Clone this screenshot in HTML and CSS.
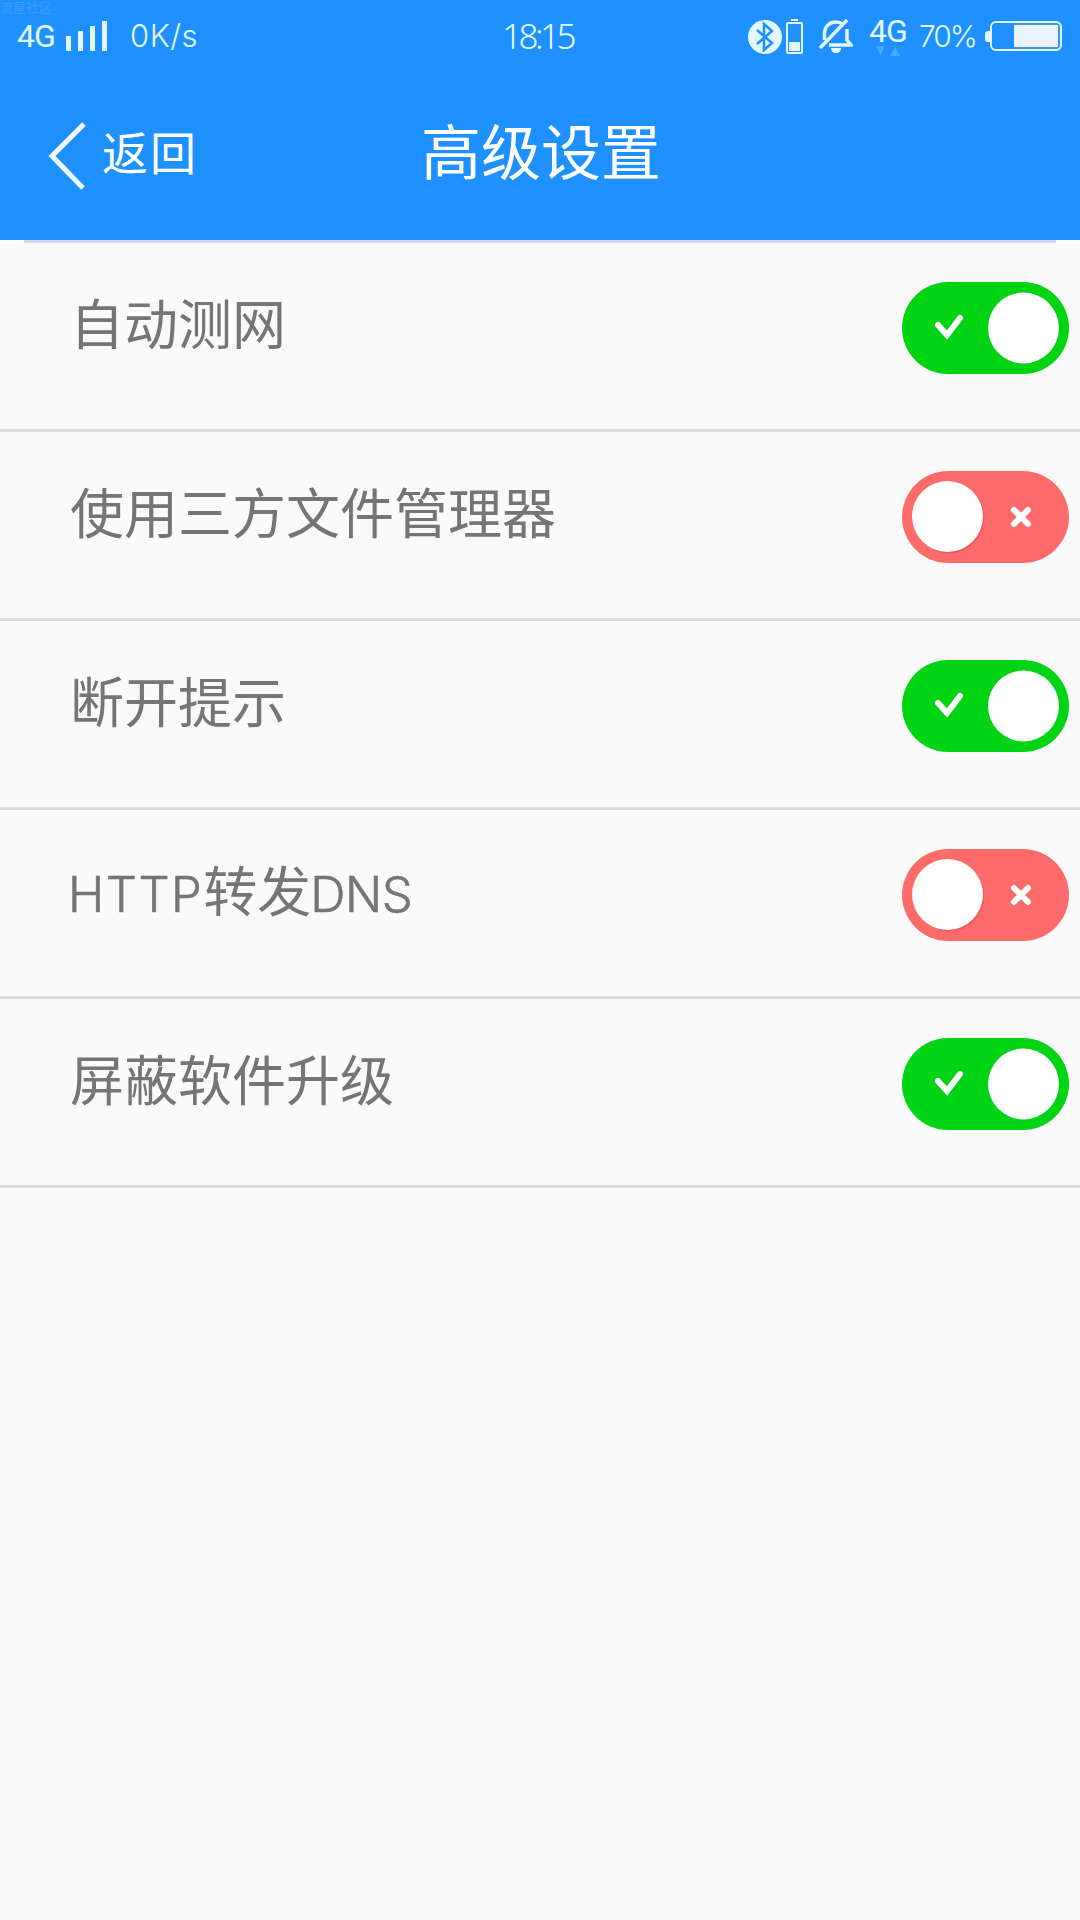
FILE: index.html
```html
<!DOCTYPE html>
<html lang="zh-CN">
<head>
    <meta charset="UTF-8">
    <meta name="viewport" content="width=device-width, initial-scale=1.0">
    <title>高级设置</title>
    <link rel="stylesheet" href="styles.css">
</head>
<body>
    <header class="header">
        <div class="watermark">流星社区</div>

        <!-- 状态栏 -->
        <div class="status-bar">
            <div class="status-left">
                <span class="network">4G</span>
                <svg class="signal" width="42" height="30" viewBox="0 0 42 30">
                    <path d="M0 15h5v15H0zM12 10h5v20h-5zM24 5h5v25h-5zM36 0h5v30h-5z"/>
                </svg>
                <span class="speed">0K/s</span>
            </div>
            <span class="time">18:15</span>
            <div class="status-right">
                <svg class="bluetooth" width="34" height="34" viewBox="0 0 34 34">
                    <circle cx="17" cy="17" r="17"/>
                    <path d="M9 10l15 13-8 7V4l8 7L9 24"/>
                </svg>
                <svg class="mini-battery" width="17" height="35" viewBox="0 0 17 35">
                    <path d="M5 0h7v2H5z"/>
                    <rect class="frame" x="1" y="4" width="15" height="30" rx="1"/>
                    <path d="M3 23h11v9H3z"/>
                </svg>
                <svg class="bell" width="34" height="35" viewBox="0 0 34 35">
                    <path class="line" d="M5.500 21v-6C5.500 7 11 3 17 3c3 0 4 0 6 2M28 10v11l4 5H10M1 29L28 1"/>
                    <path d="M12 29h10c0 3-2 5-5 5s-5-2-5-5z"/>
                </svg>
                <div class="mobile-data">
                    <span class="network">4G</span>
                    <svg class="arrows" width="24" height="10" viewBox="0 0 24 10">
                        <path d="M0 0h9L4.500 9zM14 10h10L19 1z"/>
                    </svg>
                </div>
                <span class="percent">70%</span>
                <svg class="battery" width="77" height="30" viewBox="0 0 77 30">
                    <path d="M5 10H3q-3 0-3 3v5q0 3 3 3h2z"/>
                    <rect class="inner" x="29" y="2" width="46" height="26"/>
                    <rect class="frame" x="6" y="1" width="70" height="28" rx="5"/>
                    <path class="charge" d="M29 4h44v22H29z"/>
                </svg>
            </div>
        </div>

        <!-- 标题栏 -->
        <div class="title-bar">
            <div class="back">
                <svg class="back-icon" width="38" height="70" viewBox="0 0 38 70">
                    <path d="M36 3L4 35l31 32"/>
                </svg>
                <span>返回</span>
            </div>
            <h1 class="title">高级设置</h1>
        </div>
    </header>

    <main class="settings">
        <div class="row">
            <span class="label">自动测网</span>
            <svg class="switch on" width="168" height="92" viewBox="0 0 168 92">
                <rect width="167" height="92" rx="46"/>
                <path d="M36 43l9 10 13-17"/>
                <circle cx="121.500" cy="46" r="35.500"/>
            </svg>
        </div>
        <div class="row">
            <span class="label">使用三方文件管理器</span>
            <svg class="switch off" width="168" height="92" viewBox="0 0 168 92">
                <rect width="167" height="92" rx="46"/>
                <circle class="shade" cx="47" cy="47" r="35.500"/>
                <circle cx="45.500" cy="45.500" r="35.500"/>
                <path d="M112 39l14 14M126 39l-14 14"/>
            </svg>
        </div>
        <div class="row">
            <span class="label">断开提示</span>
            <svg class="switch on" width="168" height="92" viewBox="0 0 168 92">
                <rect width="167" height="92" rx="46"/>
                <path d="M36 43l9 10 13-17"/>
                <circle cx="121.500" cy="46" r="35.500"/>
            </svg>
        </div>
        <div class="row">
            <span class="label"><span class="latin">HTTP</span>转发<span class="latin dns">DNS</span></span>
            <svg class="switch off" width="168" height="92" viewBox="0 0 168 92">
                <rect width="167" height="92" rx="46"/>
                <circle class="shade" cx="47" cy="47" r="35.500"/>
                <circle cx="45.500" cy="45.500" r="35.500"/>
                <path d="M112 39l14 14M126 39l-14 14"/>
            </svg>
        </div>
        <div class="row">
            <span class="label">屏蔽软件升级</span>
            <svg class="switch on" width="168" height="92" viewBox="0 0 168 92">
                <rect width="167" height="92" rx="46"/>
                <path d="M36 43l9 10 13-17"/>
                <circle cx="121.500" cy="46" r="35.500"/>
            </svg>
        </div>
    </main>
</body>
</html>
```
FILE: styles.css
```css
* {
    box-sizing: border-box;
}

body {
    margin: 0;
    min-height: 100vh;
    background: #fafafa;
    font-family: "Noto Sans CJK SC", sans-serif;
    overflow: hidden;
}

svg {
    display: block;
    flex: none;
}

/* 顶部 */
.header {
    position: relative;
    height: 240px;
    background: #1e90ff;
    color: #fff;
}

.watermark {
    position: absolute;
    top: 0;
    left: 0;
    font-size: 13px;
    line-height: 13px;
    color: #3b9cf8;
}

.status-bar {
    display: grid;
    grid-template-columns: 502px 73px 1fr;
    height: 72px;
    color: #e2f8ff;
    fill: #e2f8ff;
    font-family: Inter, "Liberation Sans", sans-serif;
    font-weight: 300;
    line-height: 72px;
    white-space: nowrap;
}

.status-left,
.status-right {
    display: flex;
    align-items: flex-start;
}

.status-left {
    padding-left: 17px;
}

.network {
    width: 37px;
    font-family: Roboto, sans-serif;
    font-size: 32px;
    font-weight: 400;
    letter-spacing: -1px;
}

.signal {
    margin: 21px 22px 0 12px;
}

.speed {
    font-size: 31px;
    letter-spacing: 0.5px;
}

.time {
    font-family: "Noto Sans", sans-serif;
    font-size: 35px;
    letter-spacing: -3.5px;
}

.status-right {
    padding-left: 173px;
}

.bluetooth {
    margin-top: 20px;
}

.bluetooth path {
    fill: none;
    stroke: #1e90ff;
    stroke-width: 2.5;
}

.mini-battery {
    margin: 19px 16px 0 4px;
}

.frame {
    fill: none;
    stroke: #e2f8ff;
    stroke-width: 2;
}

.bell {
    margin-top: 19px;
}

.bell .line {
    fill: none;
    stroke: #e2f8ff;
    stroke-width: 3.5;
}

.mobile-data {
    display: flex;
    flex-direction: column;
    width: 66px;
    padding-left: 16px;
}

.mobile-data .network {
    height: 46px;
    line-height: 62px;
}

.arrows {
    margin-left: 7px;
    fill: #47a9ff;
}

.percent {
    width: 66px;
    font-size: 30px;
    letter-spacing: -2px;
}

.battery {
    margin-top: 21px;
}

.battery .inner {
    fill: #3f92dc;
}

.battery .charge {
    fill: #e8f3fd;
}

/* 标题栏 */
.title-bar {
    display: grid;
    grid-template-columns: 421px 1fr;
    align-items: center;
    height: 160px;
}

.back {
    display: flex;
    align-items: center;
    padding: 8px 0 0 48px;
    font-size: 46px;
    line-height: 64px;
    letter-spacing: 2px;
}

.back span {
    margin: -13px 0 0 16px;
}

.back-icon path {
    fill: none;
    stroke: #effbff;
    stroke-width: 5;
}

.title {
    margin: -7px 0 0;
    font-size: 60px;
    font-weight: 400;
    line-height: 80px;
    white-space: nowrap;
}

/* 设置列表 */
.settings::before {
    content: "";
    display: block;
    height: 3px;
    border: solid #fff;
    border-width: 0 24px;
    background: #d2dae5;
}

.row {
    display: flex;
    justify-content: space-between;
    align-items: flex-start;
    height: 189px;
    padding: 39px 10px 0 70px;
    border-bottom: 3px solid #dcdcdc;
}

.label {
    font-size: 54px;
    line-height: 80px;
    color: #757575;
}

.latin {
    margin-left: -2px;
    font-family: Inter, "Liberation Sans", sans-serif;
    font-size: 49px;
    font-weight: 300;
    letter-spacing: 1.5px;
    -webkit-text-stroke: 0.6px #757575;
}

.dns {
    margin-left: -1px;
    letter-spacing: -0.5px;
}

.switch path {
    fill: none;
    stroke: #fff;
    stroke-width: 6;
    stroke-linecap: round;
}

.switch circle {
    fill: #fff;
}

.switch .shade {
    fill: #ee5c60;
}

.on rect {
    fill: #00d415;
}

.off rect {
    fill: #ff6b6b;
}
```
